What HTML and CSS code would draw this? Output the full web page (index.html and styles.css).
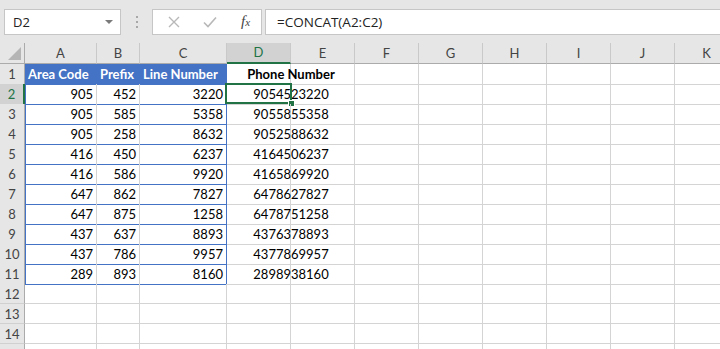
FILE: index.html
```html
<!DOCTYPE html>
<html lang="en">
<head>
  <meta charset="UTF-8">
  <title>Phone Numbers - Excel</title>
  <link rel="stylesheet" href="styles.css">
</head>
<body>

<div class="formula-bar">
  <div class="name-box">
    <span>D2</span>
    <span class="caret"></span>
  </div>
  <div class="grip"><i></i><i></i><i></i></div>
  <div class="fx-buttons">
    <svg class="btn-icon" width="14" height="14" viewBox="0 0 14 14">
      <path d="M2 2 L12 12 M12 2 L2 12" stroke="#b8b8b8" stroke-width="1.4" fill="none"/>
    </svg>
    <svg class="btn-icon" width="16" height="14" viewBox="0 0 16 14">
      <path d="M2 7.5 L6 11.5 L14 2.5" stroke="#b8b8b8" stroke-width="1.6" fill="none"/>
    </svg>
    <span class="fx">f<small>x</small></span>
  </div>
  <div class="formula-input">=CONCAT(A2:C2)</div>
</div>

<div class="sheet">
  <div class="row head-row">
    <div class="c corner"><span class="tri"></span></div>
    <div class="c ch">A</div>
    <div class="c ch">B</div>
    <div class="c ch">C</div>
    <div class="c ch active-col">D</div>
    <div class="c ch">E</div>
    <div class="c ch">F</div>
    <div class="c ch">G</div>
    <div class="c ch">H</div>
    <div class="c ch">I</div>
    <div class="c ch">J</div>
    <div class="c ch">K</div>
  </div>

  <div class="row">
    <div class="c rh">1</div>
    <div class="c th first">Area Code</div>
    <div class="c th">Prefix</div>
    <div class="c th last">Line Number</div>
    <div class="c wide"><span class="spill bold">Phone Number</span></div>
    <div class="c"></div><div class="c"></div><div class="c"></div><div class="c"></div>
    <div class="c"></div><div class="c"></div><div class="c"></div>
  </div>

  <div class="row">
    <div class="c rh active-row">2</div>
    <div class="c num td first">905</div>
    <div class="c num td">452</div>
    <div class="c num td last">3220</div>
    <div class="c wide selected"><span class="spill">9054523220</span><span class="sel"><span class="handle"></span></span></div>
    <div class="c"></div><div class="c"></div><div class="c"></div><div class="c"></div>
    <div class="c"></div><div class="c"></div><div class="c"></div>
  </div>

  <div class="row">
    <div class="c rh">3</div>
    <div class="c num td first">905</div>
    <div class="c num td">585</div>
    <div class="c num td last">5358</div>
    <div class="c wide"><span class="spill">9055855358</span></div>
    <div class="c"></div><div class="c"></div><div class="c"></div><div class="c"></div>
    <div class="c"></div><div class="c"></div><div class="c"></div>
  </div>

  <div class="row">
    <div class="c rh">4</div>
    <div class="c num td first">905</div>
    <div class="c num td">258</div>
    <div class="c num td last">8632</div>
    <div class="c wide"><span class="spill">9052588632</span></div>
    <div class="c"></div><div class="c"></div><div class="c"></div><div class="c"></div>
    <div class="c"></div><div class="c"></div><div class="c"></div>
  </div>

  <div class="row">
    <div class="c rh">5</div>
    <div class="c num td first">416</div>
    <div class="c num td">450</div>
    <div class="c num td last">6237</div>
    <div class="c wide"><span class="spill">4164506237</span></div>
    <div class="c"></div><div class="c"></div><div class="c"></div><div class="c"></div>
    <div class="c"></div><div class="c"></div><div class="c"></div>
  </div>

  <div class="row">
    <div class="c rh">6</div>
    <div class="c num td first">416</div>
    <div class="c num td">586</div>
    <div class="c num td last">9920</div>
    <div class="c wide"><span class="spill">4165869920</span></div>
    <div class="c"></div><div class="c"></div><div class="c"></div><div class="c"></div>
    <div class="c"></div><div class="c"></div><div class="c"></div>
  </div>

  <div class="row">
    <div class="c rh">7</div>
    <div class="c num td first">647</div>
    <div class="c num td">862</div>
    <div class="c num td last">7827</div>
    <div class="c wide"><span class="spill">6478627827</span></div>
    <div class="c"></div><div class="c"></div><div class="c"></div><div class="c"></div>
    <div class="c"></div><div class="c"></div><div class="c"></div>
  </div>

  <div class="row">
    <div class="c rh">8</div>
    <div class="c num td first">647</div>
    <div class="c num td">875</div>
    <div class="c num td last">1258</div>
    <div class="c wide"><span class="spill">6478751258</span></div>
    <div class="c"></div><div class="c"></div><div class="c"></div><div class="c"></div>
    <div class="c"></div><div class="c"></div><div class="c"></div>
  </div>

  <div class="row">
    <div class="c rh">9</div>
    <div class="c num td first">437</div>
    <div class="c num td">637</div>
    <div class="c num td last">8893</div>
    <div class="c wide"><span class="spill">4376378893</span></div>
    <div class="c"></div><div class="c"></div><div class="c"></div><div class="c"></div>
    <div class="c"></div><div class="c"></div><div class="c"></div>
  </div>

  <div class="row">
    <div class="c rh">10</div>
    <div class="c num td first">437</div>
    <div class="c num td">786</div>
    <div class="c num td last">9957</div>
    <div class="c wide"><span class="spill">4377869957</span></div>
    <div class="c"></div><div class="c"></div><div class="c"></div><div class="c"></div>
    <div class="c"></div><div class="c"></div><div class="c"></div>
  </div>

  <div class="row">
    <div class="c rh">11</div>
    <div class="c num td first">289</div>
    <div class="c num td">893</div>
    <div class="c num td last">8160</div>
    <div class="c wide"><span class="spill">2898938160</span></div>
    <div class="c"></div><div class="c"></div><div class="c"></div><div class="c"></div>
    <div class="c"></div><div class="c"></div><div class="c"></div>
  </div>

  <div class="row">
    <div class="c rh">12</div>
    <div class="c"></div><div class="c"></div><div class="c"></div><div class="c"></div>
    <div class="c"></div><div class="c"></div><div class="c"></div><div class="c"></div>
    <div class="c"></div><div class="c"></div><div class="c"></div>
  </div>

  <div class="row">
    <div class="c rh">13</div>
    <div class="c"></div><div class="c"></div><div class="c"></div><div class="c"></div>
    <div class="c"></div><div class="c"></div><div class="c"></div><div class="c"></div>
    <div class="c"></div><div class="c"></div><div class="c"></div>
  </div>

  <div class="row">
    <div class="c rh">14</div>
    <div class="c"></div><div class="c"></div><div class="c"></div><div class="c"></div>
    <div class="c"></div><div class="c"></div><div class="c"></div><div class="c"></div>
    <div class="c"></div><div class="c"></div><div class="c"></div>
  </div>

  <!-- next row only peeks in under the window edge -->
  <div class="row">
    <div class="c rh"></div>
    <div class="c"></div><div class="c"></div><div class="c"></div><div class="c"></div>
    <div class="c"></div><div class="c"></div><div class="c"></div><div class="c"></div>
    <div class="c"></div><div class="c"></div><div class="c"></div>
  </div>
</div>

</body>
</html>
```

FILE: styles.css
```css
html, body {
  margin: 0;
  height: 100%;
  overflow: hidden;
  background: #ffffff;
}
body {
  font-family: Lato, 'Noto Sans', sans-serif;
  color: #000;
}

/* formula bar */
.formula-bar {
  display: flex;
  align-items: center;
  height: 43px;
  background: #e6e6e6;
  padding-left: 4px;
  box-sizing: border-box;
}
.name-box {
  width: 117px;
  height: 26px;
  box-sizing: border-box;
  background: #fff;
  border: 1px solid #c6c6c6;
  display: flex;
  align-items: center;
  justify-content: space-between;
  padding: 0 7px 0 8px;
  font-family: 'Open Sans', sans-serif;
  font-size: 13px;
  color: #222;
}
.caret {
  width: 0;
  height: 0;
  border-left: 4px solid transparent;
  border-right: 4px solid transparent;
  border-top: 4px solid #7a7a7a;
}
.grip {
  width: 31px;
  display: flex;
  flex-direction: column;
  align-items: center;
  gap: 3px;
}
.grip i {
  width: 2px;
  height: 2px;
  background: #a8a8a8;
}
.fx-buttons {
  width: 110px;
  height: 26px;
  box-sizing: border-box;
  background: #fff;
  border: 1px solid #c6c6c6;
  display: flex;
  align-items: center;
  padding-left: 14px;
  gap: 21px;
}
.fx {
  font-family: 'Liberation Serif', serif;
  font-style: italic;
  font-size: 15px;
  color: #444;
  margin-left: 2px;
}
.fx small {
  font-size: 11px;
}
.formula-input {
  flex: 1;
  margin-left: 3px;
  height: 26px;
  box-sizing: border-box;
  background: #fff;
  border: 1px solid #c6c6c6;
  border-right: none;
  padding-left: 11px;
  font-family: 'Open Sans', sans-serif;
  font-size: 13.5px;
  line-height: 24px;
  color: #222;
}

/* grid */
.sheet {
  width: 740px;
}
.row {
  display: grid;
  grid-template-columns: 25px 72px 43px 87px repeat(8, 64px);
  height: 20px;
}
.c {
  box-sizing: border-box;
  border-right: 1px solid #d4d4d4;
  border-bottom: 1px solid #d4d4d4;
  font-size: 13px;
  line-height: 20px;
  padding: 0 3px;
  white-space: nowrap;
  overflow: hidden;
}
.num {
  text-align: right;
}

.head-row {
  height: 21px;
}
.ch {
  background: #e6e6e6;
  border-right-color: #c9c9c9;
  border-bottom-color: #ababab;
  text-align: center;
  color: #444;
  line-height: 20px;
}
.corner {
  position: relative;
  background: #e6e6e6;
  border-right-color: #ababab;
  border-bottom-color: #ababab;
}
.tri {
  position: absolute;
  right: 3px;
  bottom: 3px;
  width: 0;
  height: 0;
  border-left: 13px solid transparent;
  border-bottom: 13px solid #b5b5b5;
}
.rh {
  background: #e6e6e6;
  border-right-color: #ababab;
  border-bottom-color: #d0d0d0;
  text-align: center;
  color: #444;
  padding: 0;
}
.active-col {
  background: #d2d2d2;
  color: #217346;
  border-bottom: 2px solid #217346;
  line-height: 19px;
}
.active-row {
  background: #d2d2d2;
  color: #217346;
  border-right: 2px solid #217346;
}

/* table A1:C11 */
.th {
  background: #4472c4;
  border-right-color: #4472c4;
  border-bottom-color: #4472c4;
  color: #fff;
  font-weight: 700;
}
.td {
  border-bottom-color: #4472c4;
}
.first {
  box-shadow: inset 1px 0 0 #4472c4;
}
.last {
  border-right-color: #4472c4;
}

/* column D text runs over into E */
.wide {
  overflow: visible;
  padding: 0;
  position: relative;
}
.spill {
  display: block;
  width: 128px;
  text-align: center;
}
.bold {
  font-weight: 700;
}
.sel {
  position: absolute;
  left: -2px;
  top: -1px;
  width: 67px;
  height: 21px;
  box-sizing: border-box;
  border: 2px solid #217346;
}
.handle {
  position: absolute;
  right: -5px;
  bottom: -5px;
  width: 5px;
  height: 5px;
  background: #217346;
  border: 1px solid #fff;
}
```
